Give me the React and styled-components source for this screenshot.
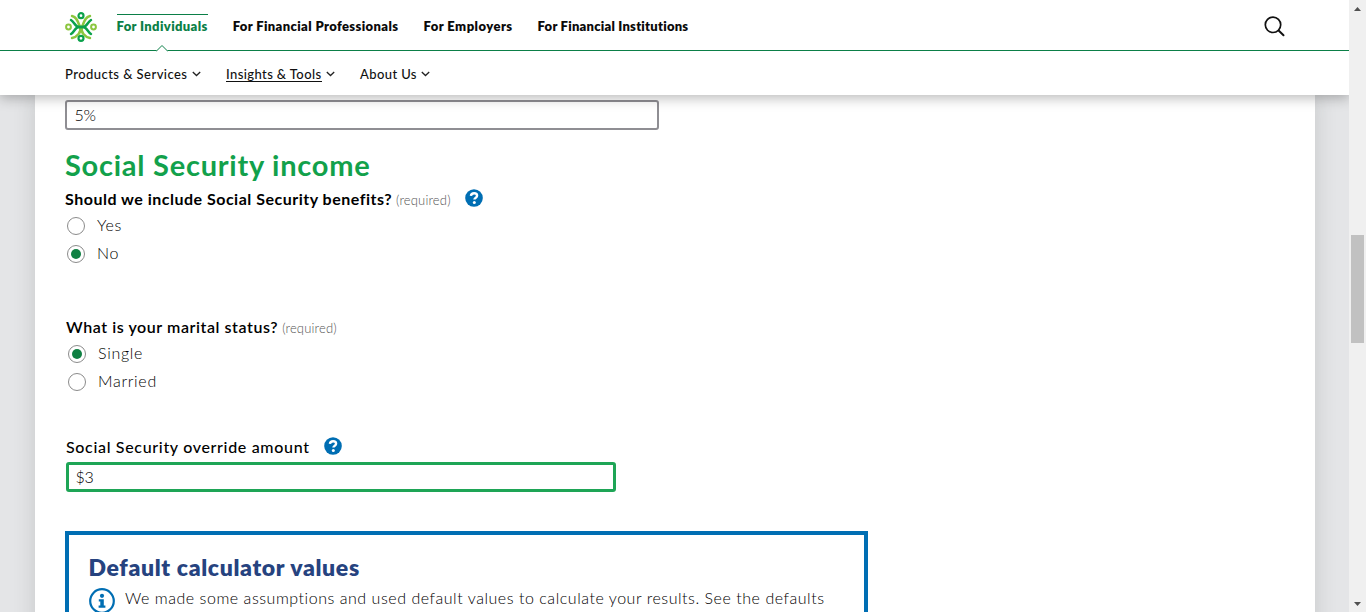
import React from 'react';
import styled, { createGlobalStyle } from 'styled-components';

const Global = createGlobalStyle`
  *, *::before, *::after { box-sizing: border-box; }
  body { margin: 0; overflow: hidden; background: #e4e5e7; color: #000; font-family: Lato, sans-serif; }
`;

const Window = styled.div`
  display: flex;
  height: 612px;
  overflow: hidden;
`;
const Viewport = styled.div`
  display: flex;
  flex-direction: column;
  flex: 1;
  min-width: 0;
  overflow: hidden;
`;
const Header = styled.header`
  position: relative;
  z-index: 2;
  flex: none;
  height: 95px;
  background: #fff;
  box-shadow: 0 3px 12px rgba(0, 0, 0, 0.28);
`;
const TopBar = styled.div`
  display: flex;
  align-items: flex-start;
  height: 51px;
  padding: 0 64px 0 65px;
  border-bottom: 1px solid #0b7f47;
`;
const Logo = styled.svg`
  width: 32px;
  height: 32px;
  margin: 11px 19.5px 0 0;
`;
const TopNav = styled.nav`
  display: flex;
  flex: 1;
  gap: 25px;
  padding-top: 14px;
`;
const TopLink = styled.a`
  position: relative;
  padding-top: 2px;
  border-top: 1px solid ${(p) => (p.$active ? '#0b7f47' : 'transparent')};
  color: ${(p) => (p.$active ? '#0b7f47' : '#0a0a0a')};
  font-size: 13px;
  font-weight: 800;
  line-height: 18px;
  letter-spacing: ${(p) => p.$ls}px;
  white-space: nowrap;
`;
const Caret = styled.svg`
  position: absolute;
  left: 50%;
  top: 29px;
  width: 12px;
  height: 8px;
  margin-left: -6px;
`;
const SearchIcon = styled.svg`
  width: 22px;
  height: 22px;
  margin: 16px -0.5px 0 0;
`;
const SubNav = styled.nav`
  display: flex;
  gap: 25px;
  padding: 13px 0 0 65px;
`;
const SubLink = styled.a`
  display: flex;
  align-items: center;
  gap: 4.5px;
  height: 18px;
  font-size: 13px;
  font-weight: 500;
  line-height: 18px;
  letter-spacing: ${(p) => p.$ls}px;
  color: #111;
  white-space: nowrap;
`;
const SubLabel = styled.span`
  height: 16px;
  line-height: 19px;
  box-shadow: ${(p) => (p.$active ? '0 1px 0 #111' : 'none')};
`;
const Chevron = styled.svg`
  width: 9px;
  height: 6px;
  margin-top: 1px;
`;

const Card = styled.main`
  flex: 1;
  width: 1280px;
  margin-left: 35px;
  padding: 5px 30px 0;
  background: #fff;
  box-shadow: 0 0 20px rgba(60, 64, 68, 0.18);
`;
const TextField = styled.div`
  display: flex;
  align-items: center;
  width: ${(p) => (p.$focus ? 550 : 594)}px;
  height: 30px;
  padding: 0 0 2px ${(p) => (p.$focus ? 6.5 : 7.5)}px;
  border: ${(p) => (p.$focus ? '3px solid #1ea556' : '2px solid #8f8e93')};
  border-radius: 3px;
  font-size: 16px;
  font-weight: 300;
  letter-spacing: -0.2px;
`;
const SectionTitle = styled.h2`
  margin: 15px 0 3px;
  color: #12a14b;
  font-size: 29px;
  font-weight: 700;
  line-height: 40px;
  letter-spacing: 0.75px;
`;
const FieldGroup = styled.section`
  padding-left: ${(p) => (p.$inset ? 1 : 0)}px;
  margin-top: ${(p) => p.$gap || 0}px;
`;
const Question = styled.div`
  display: flex;
  align-items: center;
  height: 24px;
  padding-bottom: 2px;
  font-size: 16px;
  font-weight: ${(p) => p.$weight || 600};
  line-height: 22px;
  letter-spacing: ${(p) => p.$ls}px;
  white-space: nowrap;
`;
const Required = styled.span`
  margin: 2px 0 0 4px;
  color: #555;
  font-size: 13px;
  font-weight: 300;
  letter-spacing: 0.17px;
`;
const HelpIcon = styled.svg`
  width: 18px;
  height: 18px;
  margin: -3px 0 0 14.7px;
`;
const Option = styled.label`
  display: flex;
  align-items: center;
  gap: 12px;
  height: 28px;
  padding-left: 2px;
`;
const OptionText = styled.span`
  margin-top: -3px;
  font-size: 16px;
  font-weight: 300;
  letter-spacing: 0.7px;
`;
const Radio = styled.span`
  display: flex;
  align-items: center;
  justify-content: center;
  width: 18px;
  height: 18px;
  border: 1px solid #8b8b8b;
  border-radius: 50%;
  &::after {
    content: '';
    width: 10px;
    height: 10px;
    border-radius: 50%;
    background: ${(p) => (p.$checked ? '#0f8043' : 'transparent')};
  }
`;
const Callout = styled.aside`
  width: 803px;
  height: 180px;
  margin-top: 39px;
  padding: 17px 19.5px;
  border: 4px solid #006eb3;
`;
const CalloutTitle = styled.h3`
  margin: 0;
  color: #26437f;
  font-size: 23px;
  font-weight: 800;
  line-height: 30px;
  letter-spacing: 0.65px;
`;
const CalloutBody = styled.div`
  display: flex;
  align-items: flex-start;
  gap: 10.5px;
  padding-top: 6px;
`;
const InfoIcon = styled.svg`
  flex: none;
  width: 26px;
  height: 26px;
`;
const CalloutText = styled.p`
  margin: -2px 0 0;
  font-size: 16px;
  font-weight: 300;
  line-height: 24px;
  letter-spacing: 0.54px;
  white-space: nowrap;
`;

const Scrollbar = styled.div`
  display: flex;
  flex-direction: column;
  align-items: center;
  flex: none;
  width: 17px;
  padding: 7px 0 6px;
  background: #f0f0f0;
`;
const Arrow = styled.svg`
  width: 7px;
  height: 4px;
`;
const Thumb = styled.div`
  width: 13px;
  height: 108px;
  margin: 224px 0 auto;
  background: #c1c1c1;
`;

const topLinks = [
  { label: 'For Individuals', ls: 0.37, active: true },
  { label: 'For Financial Professionals', ls: 0.39 },
  { label: 'For Employers', ls: 0.47 },
  { label: 'For Financial Institutions', ls: 0.24 },
];
const subLinks = [
  { label: 'Products & Services', ls: 0.45 },
  { label: 'Insights & Tools', ls: 0.4, active: true },
  { label: 'About Us', ls: 0.39 },
];

function Help() {
  return (
    <HelpIcon viewBox="0 0 18 18">
      <circle cx="9" cy="9" r="8.8" fill="#006eb3" />
      <path d="M5.9 6.9C6.1 5.2 7.3 4.3 9.1 4.3c1.8 0 3 .9 3 2.4 0 2-2.7 1.9-2.7 3.9" fill="none" stroke="#fff" strokeWidth="2.4" />
      <circle cx="9.3" cy="13.4" r="1.5" fill="#fff" />
    </HelpIcon>
  );
}

function RadioOption({ label, checked }) {
  return (
    <Option>
      <Radio $checked={checked} />
      <OptionText>{label}</OptionText>
    </Option>
  );
}

export default function App() {
  return (
    <Window>
      <Global />
      <Viewport>
        <Header>
          <TopBar>
            <Logo viewBox="0 0 32 32" fill="none">
              <g stroke="#8cc63f" strokeWidth="2.5" strokeLinecap="round">
                <circle cx="3.5" cy="16" r="2.4" strokeWidth="2" />
                <circle cx="28.5" cy="16" r="2.4" strokeWidth="2" />
                <path d="M7 5C12 6 13 11 15 16S12 26 7 27" />
                <path d="M25 5C20 6 19 11 17 16S20 26 25 27" />
              </g>
              <g stroke="#0ba14b" strokeWidth="2.5" strokeLinecap="round">
                <circle cx="16" cy="4.7" r="2.5" strokeWidth="2.2" />
                <circle cx="16" cy="27.3" r="2.5" strokeWidth="2.2" />
                <path d="M6 9C9.500 11 10 16 14 16H18C22 16 22.500 11 26 9" />
                <path d="M6 23C9.500 21 10 16 14 16H18C22 16 22.500 21 26 23" />
              </g>
            </Logo>
            <TopNav>
              {topLinks.map((l) => (
                <TopLink key={l.label} $ls={l.ls} $active={l.active}>
                  {l.label}
                  {l.active && (
                    <Caret viewBox="0 0 12 8">
                      <path d="M0 8V7L6 1l6 6v1z" fill="#fff" />
                      <path d="M0 7.5L6 1.5l6 6" fill="none" stroke="#0b7f47" />
                    </Caret>
                  )}
                </TopLink>
              ))}
            </TopNav>
            <SearchIcon viewBox="0 0 22 22" fill="none" stroke="#111" strokeLinecap="round">
              <circle cx="9" cy="8.8" r="7.7" strokeWidth="1.7" />
              <path d="M14.6 14.5L19.5 19.2" strokeWidth="2" />
            </SearchIcon>
          </TopBar>
          <SubNav>
            {subLinks.map((l) => (
              <SubLink key={l.label} $ls={l.ls}>
                <SubLabel $active={l.active}>{l.label}</SubLabel>
                <Chevron viewBox="0 0 9 6">
                  <path d="M.8 1L4.5 4.5 8.2 1" fill="none" stroke="#222" strokeWidth="1.3" />
                </Chevron>
              </SubLink>
            ))}
          </SubNav>
        </Header>
        <Card>
          <TextField>5%</TextField>
          <SectionTitle>Social Security income</SectionTitle>
          <FieldGroup>
            <Question $ls={0.5} $weight={700}>
              Should we include Social Security benefits?
              <Required>(required)</Required>
              <Help />
            </Question>
            <RadioOption label="Yes" />
            <RadioOption label="No" checked />
          </FieldGroup>
          <FieldGroup $inset $gap={48}>
            <Question $ls={0.57}>
              What is your marital status?
              <Required>(required)</Required>
            </Question>
            <RadioOption label="Single" checked />
            <RadioOption label="Married" />
          </FieldGroup>
          <FieldGroup $inset $gap={40}>
            <Question $ls={0.67} $weight={500}>
              Social Security override amount
              <Help />
            </Question>
            <FieldGroup $gap={2}>
              <TextField $focus>$3</TextField>
            </FieldGroup>
          </FieldGroup>
          <Callout>
            <CalloutTitle>Default calculator values</CalloutTitle>
            <CalloutBody>
              <InfoIcon viewBox="0 0 26 26">
                <circle cx="13" cy="13" r="11.8" fill="none" stroke="#006eb3" strokeWidth="2.2" />
                <circle cx="13" cy="7.8" r="2.1" fill="#006eb3" />
                <path d="M9.8 11.2h5v6.3h1.6v2.3h-6.8v-2.3h1.700v-4h-1.500z" fill="#006eb3" />
              </InfoIcon>
              <CalloutText>
                We made some assumptions and used default values to calculate your results. See the defaults
              </CalloutText>
            </CalloutBody>
          </Callout>
        </Card>
      </Viewport>
      <Scrollbar>
        <Arrow viewBox="0 0 7 4"><path d="M0 4L3.5 0 7 4z" fill="#505050" /></Arrow>
        <Thumb />
        <Arrow viewBox="0 0 7 4"><path d="M0 0L3.5 4 7 0z" fill="#505050" /></Arrow>
      </Scrollbar>
    </Window>
  );
}
